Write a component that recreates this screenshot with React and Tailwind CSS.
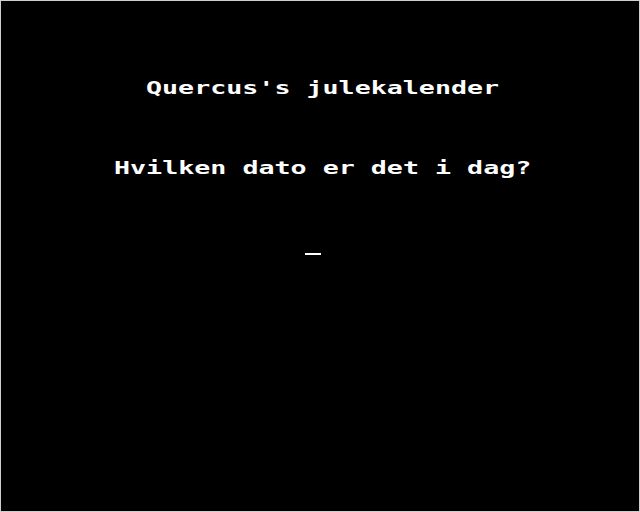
// Retro micro-computer prompt screen: 40 column text grid, 16px cells.

const FONT = { fontFamily: '"DejaVu Sans Mono", "Liberation Mono", monospace' }

function Line({ col, children }) {
  return (
    <div className="h-[16px]" style={{ paddingLeft: col * 16 + 1 }}>
      <span className="inline-block origin-left scale-x-[1.481] text-[18px] font-bold leading-[16px] text-white whitespace-pre">
        {children}
      </span>
    </div>
  )
}

export default function App() {
  return (
    <div className="w-[640px] h-[512px] bg-black border border-[#cfcfcf] box-border overflow-hidden" style={FONT}>
      <div className="flex flex-col pt-[76px]">
        <Line col={9}>Quercus's julekalender</Line>
        <div className="h-[64px]" />
        <Line col={7}>Hvilken dato er det i dag?</Line>
        <div className="h-[80px]" />
        <div className="pl-[304px]">
          <div className="w-[16px] h-[2px] bg-white" />
        </div>
      </div>
    </div>
  )
}
